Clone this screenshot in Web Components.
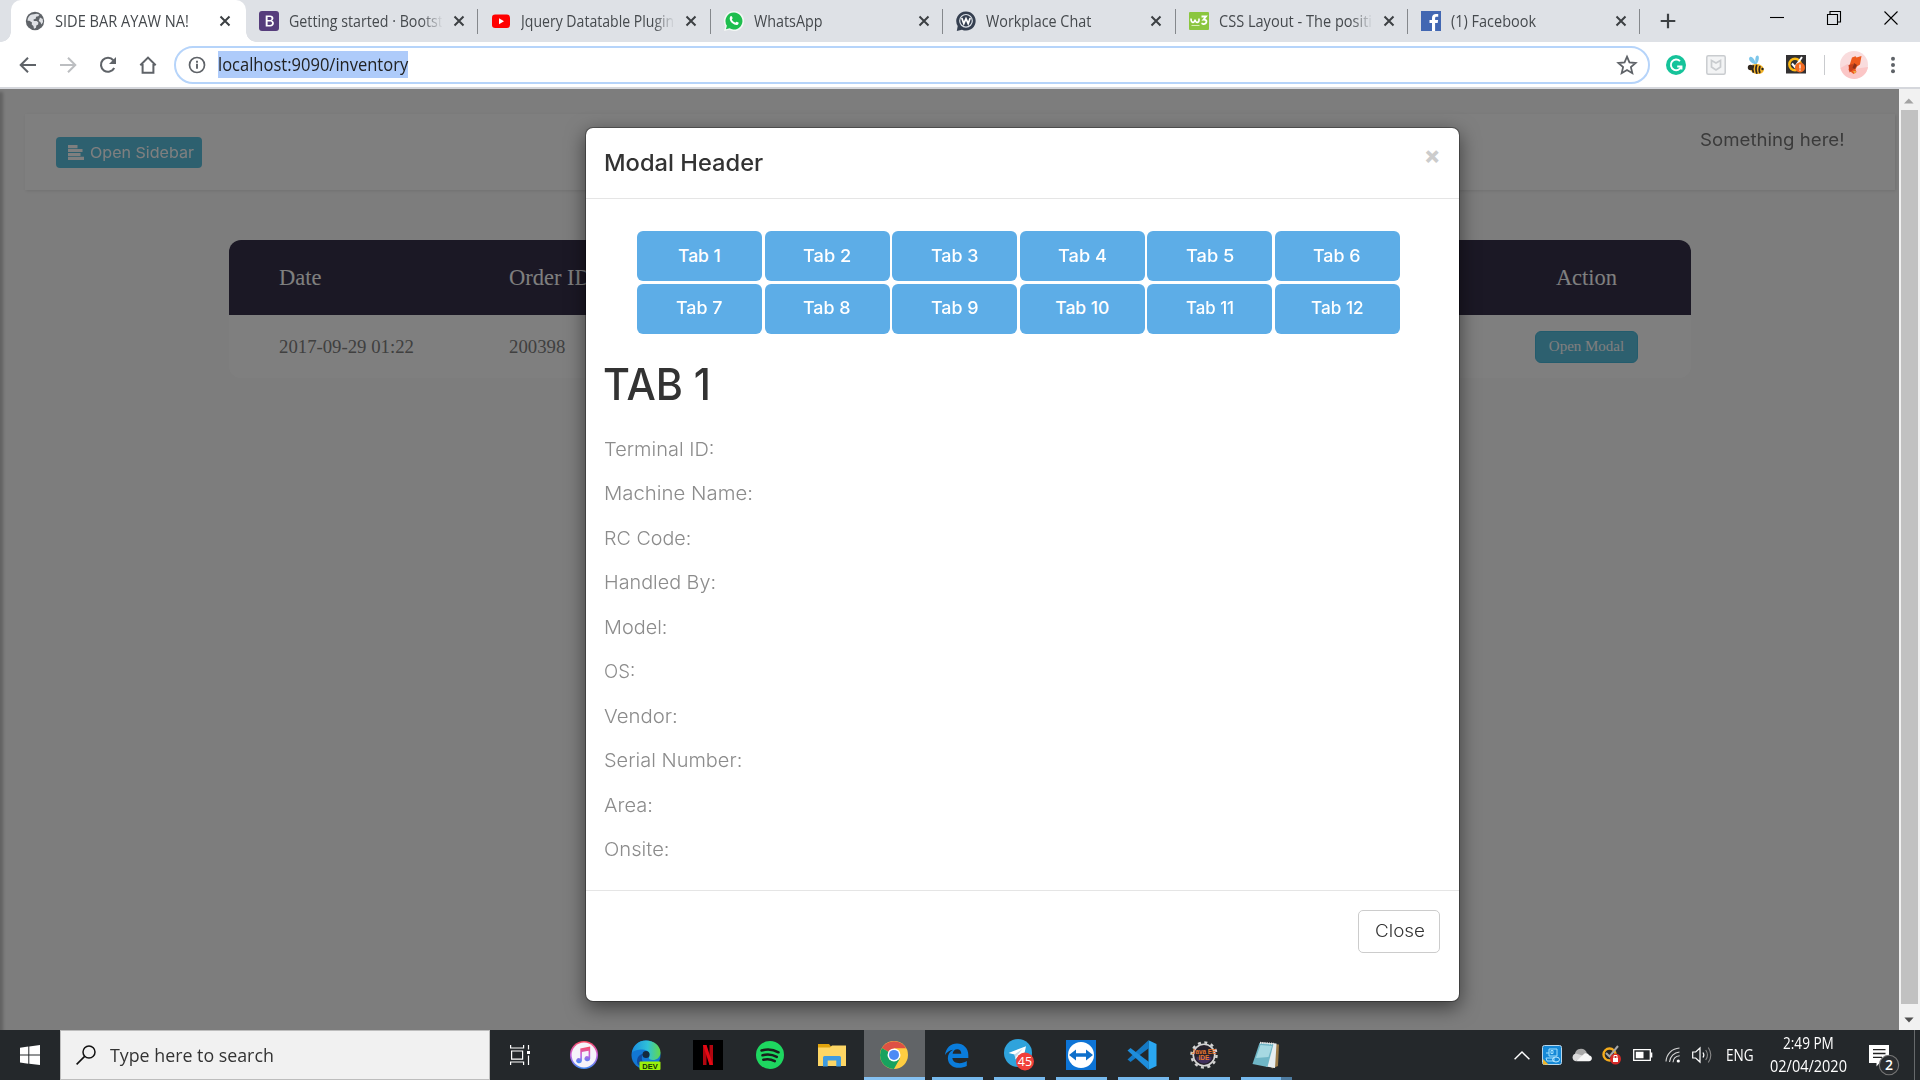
<!DOCTYPE html>
<html lang="en">
<head>
<meta charset="utf-8">
<title>SIDE BAR AYAW NA!</title>
<style>
html,body{margin:0;padding:0;width:1920px;height:1080px;overflow:hidden}
</style>
</head>
<body>
<desktop-screen></desktop-screen>
<script>
const ICONS = {
globe:['0 0 20 20','<circle cx="10" cy="10" r="9.2" fill="#5f6368"/><path d="M9 3.2c2-.9 4-.6 5.5.6l-1.2 1.5-2.2.4-.4 2-2.2.8.3 1.5h3l1.6 1.4-.3 2-1.8 1-.3 2.3-2 1.1-.6-2.7-1.7-1.6.3-2-2.6-1.8-1.9.1c.1-3.2 1.9-5.500 4.200-6.200z" fill="#dfe1e5"/><path d="M15 6.500l2.700 1.500.3 3-1.500 2.500-1.200-2.500-1.600-1z" fill="#dfe1e5"/>'],
boot:['0 0 20 20','<rect width="20" height="20" rx="3" fill="#563d7c"/><path d="M6.700 4.500h4.500c2 0 3.200 1 3.200 2.700 0 1.200-.7 2.100-1.800 2.400 1.400.2 2.300 1.300 2.300 2.700 0 2-1.400 3.200-3.700 3.200H6.700zM8.600 6.100v3h2.100c1.200 0 1.800-.5 1.800-1.500s-.6-1.500-1.700-1.500zm0 4.500v3.300h2.400c1.300 0 2-.6 2-1.700s-.7-1.600-2.100-1.600z" fill="#fff" fill-rule="evenodd"/>'],
yt:['0 0 20 20','<rect x="1" y="3.500" width="18" height="13.500" rx="3.200" fill="#f00"/><path d="M8 7.300l5 3-5 3z" fill="#fff"/>'],
wa:['0 0 20 20','<path d="M10 0a10 10 0 1 1-4.700 18.800L0 20l1.300-5A10 10 0 0 1 10 0z" fill="#f4f7f5"/><path d="M10 1.500a8.500 8.500 0 1 1-4.400 15.800l-3.700 1 1-3.600A8.500 8.500 0 0 1 10 1.500z" fill="#1ebe4e"/><path d="M6.500 5.300c.5-.5 1.200-.4 1.500.3l.6 1.500c.1.500-.6 1.100-.8 1.400.7 1.500 1.900 2.500 3.500 3.200.4-.3.900-1.300 1.400-1l1.800.9c.5.300-.1 1.700-.8 2.100-1.300.8-3.700-.1-5.600-1.700-1.500-1.300-3.500-4.300-1.600-6.700z" fill="#fff"/>'],
work:['0 0 20 20','<path d="M10 .4a9.600 9.600 0 1 1-4 18.300L.8 20l.9-5A9.600 9.600 0 0 1 10 .4z" fill="#353f50"/><circle cx="10" cy="9.800" r="6.300" fill="none" stroke="#dfe4ea" stroke-width="1.200"/><path d="M5.800 7l2 5.600L10 7.600l2.200 5 2-5.600" fill="none" stroke="#fff" stroke-width="1.700"/>'],
w3:['0 0 20 20','<rect width="20" height="18" y="1" rx="1" fill="#8bc63f"/><path d="M2 7.500c0 5 3.500 5 4 1 .5 4 4.500 4 4-1" fill="none" stroke="#fff" stroke-width="1.600"/><path d="M12.500 5.500h4.500l-2.500 3.200c4.500-.5 3.500 5-.5 4.300l-1.500-.8" fill="none" stroke="#fff" stroke-width="1.800"/><path d="M2.500 14.500h8" stroke="#d8efb5" stroke-width="1"/>'],
fb:['0 0 20 20','<rect width="20" height="20" fill="#4267b2"/><path d="M11 20v-8H8.500V9H11V7c0-2.700 1.500-4 4-4h2.200v2.800h-1.600c-1.200 0-1.500.6-1.500 1.500V9h3l-.4 3h-2.600v8z" fill="#fff"/>'],
x:['0 0 12 12','<path d="M1.500 1.500l9 9M10.500 1.500l-9 9" stroke="#3c4043" stroke-width="2" fill="none"/>'],
plus:['0 0 16 16','<path d="M8 .7v14.600M.7 8h14.600" stroke="#3c4043" stroke-width="2.200"/>'],
wmin:['0 0 14 14','<path d="M0 6.500h14" stroke="#000" stroke-width="1.100"/>'],
wmax:['0 0 14 14','<path d="M.5 3.500h10v10H.5zM3 3.500V.5h10.500v10.500H11" stroke="#000" stroke-width="1.100" fill="none"/>'],
wclose:['0 0 14 14','<path d="M.5.5l13 13M13.500.5l-13 13" stroke="#000" stroke-width="1.100"/>'],
back:['0 0 18 18','<path d="M17 9H2.500M9 1.700L1.700 9 9 16.300" stroke="#5f6368" stroke-width="2" fill="none"/>'],
fwd:['0 0 18 18','<path d="M1 9h14.500M9 1.700L16.300 9 9 16.300" stroke="#bcbec1" stroke-width="2" fill="none"/>'],
reload:['0 0 18 18','<path d="M15.200 12A7 7 0 1 1 14.300 4.200" stroke="#5f6368" stroke-width="2.100" fill="none"/><path d="M17 1v7h-7z" fill="#5f6368"/>'],
home:['0 0 18 18','<path d="M1.300 9.200L9 1.600l7.700 7.600M3.600 8v8.800h10.800V8" stroke="#5f6368" stroke-width="2" fill="none"/>'],
info:['0 0 18 18','<circle cx="9" cy="9" r="7.500" stroke="#5f6368" stroke-width="1.700" fill="none"/><path d="M9 7.800v5M9 4.700v2" stroke="#5f6368" stroke-width="1.900"/>'],
star:['0 0 18 18','<path d="M9 1.500l2.200 5.200 5.600.5-4.300 3.700 1.300 5.500L9 13.500l-4.800 2.900 1.300-5.500L1.200 7.200l5.600-.5z" stroke="#5f6368" stroke-width="1.600" fill="none"/>'],
gram:['0 0 20 20','<circle cx="10" cy="10" r="10" fill="#15c39a"/><path d="M14 6.200a5.300 5.300 0 1 0 1.200 5.300h-4M15.500 11v3.500" stroke="#fff" stroke-width="1.900" fill="none"/>'],
mcafee:['0 0 20 20','<rect x=".8" y=".8" width="18.400" height="18.400" rx="1.500" fill="#f3f4f5" stroke="#c9cccf" stroke-width="1.500"/><path d="M5.500 5.500l4.500 2.500 4.500-2.500v6.500L10 15l-4.500-3z" fill="none" stroke="#c9cccf" stroke-width="1.700"/>'],
bee:['0 0 20 20','<path d="M8.500 9C3 7 2 3 4 2s5 3 5.500 6C9 4 9.500.5 11.500.500s2 5-1 8.500z" fill="#7cc6ea"/><ellipse cx="11" cy="14" rx="7" ry="5" fill="#f4b52b" transform="rotate(12 11 14)"/><path d="M7.500 10.200c-1 2-1 5 0 7.500M10.800 9.800c-1.300 3-1 6 .2 9M14 11c-1 2.500-1 5 0 7" stroke="#2b2320" stroke-width="1.700" fill="none"/><circle cx="4.500" cy="12.500" r="2.700" fill="#32281f"/><circle cx="16.500" cy="14" r="1.200" fill="#222"/>'],
norton:['0 0 20 20','<rect width="20" height="18.500" fill="#333132"/><circle cx="9" cy="9.500" r="5.700" fill="none" stroke="#fdbb13" stroke-width="2.400"/><path d="M6 8.500l3 3.500 7-10" stroke="#fff" stroke-width="2" fill="none"/><circle cx="14" cy="12.500" r="5" fill="#f26a21"/><path d="M14 9.500v4M14 14.500v1.300" stroke="#fff" stroke-width="1.200"/>'],
avatar:['0 0 28 28','<circle cx="14" cy="14" r="14" fill="#f9dcdd"/><path d="M.5 17l7-4 6 5 14.500-2a14 14 0 0 1-27.500 1z" fill="#fbc6c6"/><path d="M12 6.500l3.500-1.200 1 1.200L21.500 5 20 13.500l-3 2-1.500 3 1 2.500-3 2-5-4 1-4.500z" fill="#ee5a1e"/><path d="M8.500 14l4.500-1 1 5-4.500 3.500z" fill="#c8401a"/><path d="M14 12l3 2-2 4-2.500-1z" fill="#8e3018"/><path d="M13 20l3 0-1 3z" fill="#e8b04a"/>'],
dots:['0 0 6 20','<circle cx="3" cy="3.700" r="2" fill="#5f6368"/><circle cx="3" cy="10" r="2" fill="#5f6368"/><circle cx="3" cy="16.300" r="2" fill="#5f6368"/>'],
align:['0 0 16 15','<path d="M0 0h9.500v3.200H0zM0 4h14.500v3H0zM0 8h12.500v3H0zM0 11.800h16V15H0z" fill="#fff"/>'],
up:['0 0 10 6','<path d="M0 5.500L4.800.500l4.800 5z" fill="#a3a3a3"/>'],
down:['0 0 10 6','<path d="M.4.500L5 5.500l4.600-5z" fill="#505050"/>'],
win:['0 0 20 20','<path d="M0 2.800l8.300-1.200v8H0zM9.300 1.400L20 0v9.600H9.300zM0 10.600h8.300v8.100L0 17.500zM9.300 10.600H20V20L9.300 18.700z" fill="#fff"/>'],
search:['0 0 20 20','<circle cx="13" cy="7" r="6" stroke="#111" stroke-width="1.500" fill="none"/><path d="M8.600 11.400L.6 19.400" stroke="#111" stroke-width="1.600"/>'],
taskview:['0 0 20 20','<path d="M.6 0v3h13V0M.6 20v-3h13v3M1.600 6h11v8.200h-11zM18.500 0v4.500M18.500 10.500V20" stroke="#fff" stroke-width="1.200" fill="none"/><path d="M17 6h3v3h-3z" fill="#fff"/>'],
itunes:['0 0 28 28','<defs><linearGradient id="a" x1="0" y1="0" x2="0" y2="1"><stop offset="0" stop-color="#fb4b5f"/><stop offset=".5" stop-color="#c860e0"/><stop offset="1" stop-color="#3d8df5"/></linearGradient></defs><circle cx="14" cy="14" r="14" fill="url(#a)"/><circle cx="14" cy="14" r="12.400" fill="#f5f3fa"/><path d="M10.300 7.500L20.200 5.500v12.300a2.900 2.500 0 1 1-1.600-2.300V9.700l-6.700 1.400v8.700a2.900 2.500 0 1 1-1.600-2.300z" fill="url(#a)"/>'],
edgedev:['0 0 30 30','<defs><linearGradient id="b" x1="0" y1="0" x2="1" y2="0"><stop offset="0" stop-color="#1b8fe0"/><stop offset=".55" stop-color="#2fc1d8"/><stop offset="1" stop-color="#63d94a"/></linearGradient></defs><circle cx="15" cy="15" r="14.500" fill="#1277d4"/><path d="M1 13C2 5 8 .5 15 .5c8 0 14.500 5.500 14.500 12 0 5-4 7.500-7.500 7.500-3 0-4.500-1-4-2.500 2-4-1-8-6.500-8C6 9.500 2 11 1 13z" fill="url(#b)"/><path d="M12 14c-3 5 0 11 6 12-5 2-9 .5-11.500-2C5 19 7.500 14.500 12 14z" fill="#114a9c"/><circle cx="15" cy="14.500" r="3.500" fill="#152a3e"/><rect x="8.500" y="21.500" width="21" height="8.500" rx="1" fill="#9bf00b"/><text x="19" y="28.700" font-family="Liberation Sans" font-weight="700" font-size="7.500" text-anchor="middle" fill="#10300a">DEV</text>'],
netflix:['0 0 30 30','<rect width="30" height="30" fill="#000"/><path d="M10 5h3.500v20H10zM16.500 5H20v20h-3.500z" fill="#b1060f"/><path d="M10 5h3.500L20 25h-3.500z" fill="#e50914"/>'],
spotify:['0 0 28 28','<circle cx="14" cy="14" r="14" fill="#1ed760"/><path d="M5.500 9.500c6-1.700 12-1 17 1.800M6.500 14.300c5-1.400 10-.8 14.300 1.600M7.300 18.700c4-1 8-.5 11.500 1.400" stroke="#191f1c" stroke-width="2.500" fill="none" stroke-linecap="round"/>'],
folder:['0 0 28 24','<path d="M0 1h11l2 2.500H28V23H0z" fill="#e0a30c"/><path d="M0 4.500h12l2-2h14V23H0z" fill="#fdd665"/><path d="M5 23.500V14.500q0-1.500 1.500-1.500h15q1.500 0 1.500 1.500v9h-4.700V17.500H9.700v6z" fill="#3f9be0"/>'],
chrome:['0 0 28 28','<circle cx="14" cy="14" r="14" fill="#ffcd41"/><path d="M14 14L1.900 7A14 14 0 0 1 26.100 7.200H14z" fill="#de5144"/><path d="M14 14L1.900 7a14 14 0 0 0 12 21l6-10.500z" fill="#18a25f"/><circle cx="14" cy="13.900" r="6.500" fill="#fff"/><circle cx="14" cy="13.900" r="5" fill="#4c8bf5"/>'],
edge:['0 0 26 26','<path d="M1 12.500C2 5 7 .500 13.500.500 20 .500 25.300 5.300 25.300 12.500v3.200H8.700c.3 3.700 3.500 5.300 7.500 5.300 2.800 0 5.300-.8 7.500-2.200v5C21.500 25 18.500 25.700 15.500 25.700 9 25.700 4.300 22 4 16c-.1-4 2-7 5.500-9C6 7.500 3 9.500 1 12.500zM9 11.300h9c0-3-1.500-4.800-4.200-4.800S9.300 8.500 9 11.300z" fill="#0a7cdb" fill-rule="evenodd"/>'],
telegram:['0 0 30 32','<circle cx="14" cy="14" r="14" fill="#2fa3dc"/><path d="M4.500 14L22 7.200l-3 14-5-3.400-2.500 2.800-.9-5z" fill="#fff"/><path d="M10.500 15.500L19 9.500l-6.500 7.500-1 3.500z" fill="#c5daea"/><circle cx="21" cy="22.500" r="9" fill="#f03f3a"/><text x="21" y="27" font-family="Open Sans" font-size="12.500" text-anchor="middle" fill="#fff">45</text>'],
tv:['0 0 30 30','<rect width="30" height="30" fill="#0d74d6"/><circle cx="15" cy="15" r="13" fill="#fff"/><path d="M3 15l7-5.500v3.800h10V9.500l7 5.500-7 5.500v-3.800H10v3.800z" fill="#0e70cb"/>'],
vscode:['0 0 30 30','<path d="M21.500.3L29.500 4v22l-8 3.700z" fill="#2aa7f2"/><path d="M22 8L3.500 22l-3-2.500L21.500.3z" fill="#1479c4"/><path d="M22 22L3.500 8l-3 2.500 21 19.200z" fill="#1e8ddb"/>'],
java:['0 0 30 30','<circle cx="15" cy="15" r="11.500" fill="#27222c" stroke="#d4d4d4" stroke-width="1.800"/><circle cx="15" cy="15" r="13.400" fill="none" stroke="#d4d4d4" stroke-width="2.600" stroke-dasharray="3.200 3.815"/><path d="M7 17h16v3q-8 8-16 0z" fill="#41305e"/><text x="15" y="14.300" font-family="Liberation Sans" font-weight="700" font-size="7.300" text-anchor="middle" fill="#e8772c" textLength="26" lengthAdjust="spacingAndGlyphs">Java EE</text><text x="15" y="20.500" font-family="Liberation Sans" font-weight="700" font-size="7" text-anchor="middle" fill="#e8772c">IDE</text>'],
notepad:['0 0 28 28','<path d="M8 1.500L27 3.500 26 25 20 27.500z" fill="#9b7b48"/><path d="M9 1.500L24.500 2.500 23 27 14 25.500z" fill="#e6edf0"/><path d="M7.500 2L21.500 3 15.500 26 .500 23z" fill="#6fb6c6"/><path d="M8.500 4L20 5 16.500 16 4 17z" fill="#a6d9e2"/><path d="M8 1.800L22 2.800" stroke="#e6e6e6" stroke-width="2" stroke-dasharray="1.200 1"/>'],
caret:['0 0 16 9','<path d="M.6 8.300L8 .9l7.400 7.400" stroke="#fff" stroke-width="1.400" fill="none"/>'],
intel:['0 0 20 20','<rect x=".5" y=".5" width="19" height="19" rx="2" fill="#1588d6" stroke="#b9d6ea"/><path d="M1 14l5.500 5.500H1z" fill="#f0b429"/><path d="M7 4h8v7H7zM9 5.500h2v3H9zM4 8h3M4 13h8v3H5z" fill="none" stroke="#9fe0ff" stroke-width="1"/><ellipse cx="14" cy="14.500" rx="3.500" ry="2.500" fill="none" stroke="#bfeaff"/>'],
cloud:['0 0 20 14','<path d="M3 9.500C2 4 5 .800 9 .800c3 0 5.300 2 6 4.500L8 10z" fill="#a9a9a9"/><path d="M3.800 13.200A3.900 3.900 0 0 1 4 5.500L12 8z" fill="#dadada"/><path d="M4 13.200L12.500 5.500c2-.9 4 0 4.500 1.800 4 .5 3.700 5.900 0 5.900z" fill="#f7f7f7"/>'],
nshield:['0 0 20 20','<circle cx="7.500" cy="9.500" r="6" fill="none" stroke="#f5ac1c" stroke-width="2.400"/><path d="M4 8l3.500 3.500L16 1" stroke="#a8a8a8" stroke-width="2" fill="none"/><circle cx="13.500" cy="14" r="5.500" fill="#d42a28"/><path d="M11 13h5v4h-5z" fill="#fff"/><path d="M12 13v-2.500h3V13" stroke="#fff" fill="none"/>'],
batt:['0 0 20 12','<path d="M.7.700h16.600v10.600H.7z" fill="none" stroke="#fff" stroke-width="1.300"/><path d="M2.800 2.800h7.700v6.400H2.800zM18 3.500h1.300v5H18z" fill="#fff"/>'],
wifi:['0 0 16 16','<path d="M1 14.500C1.500 7 7 1.500 14.500 1M4.500 15C5 9.500 9 5.500 14.500 5M8 15.300c.3-3.500 3-6.200 6.700-6.500" stroke="#d7d7d7" stroke-width="1.100" fill="none"/><circle cx="13.300" cy="14" r="1.600" fill="#fff"/>'],
vol:['0 0 20 18','<path d="M.7 6h3L8 2v14l-4.300-4H.7z" stroke="#fff" stroke-width="1.200" fill="none"/><path d="M11 6.500q1.700 2.500 0 5" stroke="#fff" fill="none" stroke-width="1.200"/><path d="M13.700 4q3.500 5 0 10M16.300 1.500q5 7.500 0 15" stroke="#888" fill="none" stroke-width="1.100"/>'],
note:['0 0 30 32','<path d="M0 0h20v18h-9.500l-3 3.500V18H0z" fill="#fff"/><path d="M4 4.700h12.500M4 8.500h12.500M4 12.300h9" stroke="#222" stroke-width="1.300"/><circle cx="20" cy="20" r="9.700" fill="#2a2d30" stroke="#777" stroke-width="1.100"/><text x="20" y="25" font-family="Open Sans" font-weight="600" font-size="14" text-anchor="middle" fill="#fff">2</text>']
};

const define = (name, html, setup) => customElements.define(name, class extends HTMLElement {
  constructor() {
    super();
    this.attachShadow({mode:'open'});
  }
  connectedCallback() {
    if (this.ready) return;
    this.ready = true;
    this.shadowRoot.innerHTML = typeof html === 'function' ? html(this) : html;
    if (setup) setup(this);
  }
});

define('ui-icon', el => {
  const [vb, body] = ICONS[el.getAttribute('name')];
  return `<style>:host{display:block;flex:none;width:${el.getAttribute('w')}px;height:${el.getAttribute('h') || el.getAttribute('w')}px}svg{display:block;width:100%;height:100%;overflow:visible}</style><svg viewBox="${vb}" preserveAspectRatio="none">${body}</svg>`;
});

define('browser-tab', el => `<style>
:host{display:flex;flex:none;align-items:center;width:232.4px;height:42px;box-sizing:border-box;padding-left:13px;position:relative;font:16px/42px "Open Sans",sans-serif;color:#45494d}
.t{width:153px;margin-left:10px;overflow:hidden;white-space:nowrap;height:42px}
:host([fade]) .t{-webkit-mask-image:linear-gradient(90deg,#000 132px,transparent 154px)}
.c{margin-left:11px}
:host([active]){background:#fff;border-radius:10px 10px 0 0;width:235px;padding-left:14px}
:host([active]) .t{width:153px}
:host([active])::before,:host([active])::after{content:"";position:absolute;bottom:0;width:10px;height:10px}
:host([active])::before{left:-10px;background:radial-gradient(circle at 0 0,transparent 9.500px,#fff 10px)}
:host([active])::after{right:-10px;background:radial-gradient(circle at 100% 0,transparent 9.500px,#fff 10px)}
:host(:not([active]))::after{content:"";position:absolute;right:0;top:9px;width:1px;height:25px;background:#85888c}
</style><ui-icon name="${el.getAttribute('icon')}" w="20"></ui-icon><div class="t"><fit-text w="${el.getAttribute('w')}"><slot></slot></fit-text></div><ui-icon class="c" name="x" w="12"></ui-icon>`);

define('tab-strip', `<style>
:host{display:flex;height:42px;background:#dee1e6;padding-left:11px}
.p{margin:13px 0 0 20px}
.w{margin-left:auto;display:flex;gap:43px;padding:11px 22px 0 0}
</style>
<browser-tab active icon="globe" w="134">SIDE BAR AYAW NA!</browser-tab>
<browser-tab fade icon="boot" w="176">Getting started · Bootstrap</browser-tab>
<browser-tab fade icon="yt" w="160">Jquery Datatable Plugins</browser-tab>
<browser-tab icon="wa" w="69">WhatsApp</browser-tab>
<browser-tab icon="work" w="105">Workplace Chat</browser-tab>
<browser-tab fade icon="w3" w="171">CSS Layout - The position</browser-tab>
<browser-tab icon="fb" w="85">(1) Facebook</browser-tab>
<ui-icon class="p" name="plus" w="16"></ui-icon>
<div class="w"><ui-icon name="wmin" w="14"></ui-icon><ui-icon name="wmax" w="14"></ui-icon><ui-icon name="wclose" w="14"></ui-icon></div>`);

define('nav-toolbar', `<style>
:host{display:flex;align-items:center;height:47px;box-sizing:border-box;background:#fff;border-bottom:2px solid #d5d7dc;padding:0 21px 0 19px;font:18px/27px "Open Sans",sans-serif;color:#222}
.nav{display:flex;gap:22px}
.o{display:flex;align-items:center;box-sizing:border-box;width:1476px;height:38px;border:2.500px solid #b6d4fa;border-radius:19px;margin-left:17px;padding:0 11px 0 12px}
.u{background:#aecbfa;margin-left:12px;height:27px}
.s{margin-left:auto}
.e{display:flex;align-items:center;gap:20px;margin-left:16px}
.l{width:1px;height:20px;background:#c9cbce}
.a{margin:0 22px 0 15px}
</style><div class="nav"><ui-icon name="back" w="18"></ui-icon><ui-icon name="fwd" w="18"></ui-icon><ui-icon name="reload" w="18"></ui-icon><ui-icon name="home" w="18"></ui-icon></div>
<div class="o"><ui-icon name="info" w="18"></ui-icon><div class="u"><fit-text w="190">localhost:9090/inventory</fit-text></div><ui-icon class="s" name="star" w="20"></ui-icon></div>
<div class="e"><ui-icon name="gram" w="20"></ui-icon><ui-icon name="mcafee" w="20"></ui-icon><ui-icon name="bee" w="20"></ui-icon><ui-icon name="norton" w="20"></ui-icon></div>
<div class="l" style="margin-left:18px"></div><ui-icon class="a" name="avatar" w="28"></ui-icon><ui-icon name="dots" w="6" h="20"></ui-icon>`);

define('page-navbar', `<style>
:host{display:flex;box-sizing:border-box;height:76px;margin:25px 4px 0 25px;padding:23px 50px 0 31px;background:#fff;box-shadow:1px 1px 3px rgba(0,0,0,.1);justify-content:space-between;font-family:Inter,sans-serif}
button{display:flex;align-items:center;width:146px;height:31px;border:0;border-radius:4px;background:#5bc0de;color:#fff;padding:0 0 0 12px;font:400 15px/31px Inter,sans-serif}
p{margin:-9px 0 0;font-size:17.500px;line-height:24px;color:#777}
</style><button><ui-icon name="align" w="16" h="15"></ui-icon><fit-text w="104" style="margin-left:2.500px">Open Sidebar</fit-text></button><p><fit-text w="145">Something here!</fit-text></p>`);

define('order-table', `<style>
:host{display:block;width:1462px;margin:50px 0 0 229px;border-radius:12px;overflow:hidden;background:#fff;font-family:"Liberation Serif",serif}
.r{display:grid;grid-template-columns:230px 1fr 209px;padding-left:50px;align-items:center;height:63px;font-size:18.750px;color:#808080}
.h{height:75px;background:#36304a;color:#fff;font-size:22.500px}
.a{display:flex;justify-content:center}
button{width:103px;height:32px;padding:0;border:1px solid #46b8da;border-radius:6px;background:#5bc0de;color:#fff;font:15px "Liberation Serif",serif}
</style><div class="r h"><span>Date</span><span>Order ID</span><span class="a">Action</span></div>
<div class="r"><span>2017-09-29 01:22</span><span>200398</span><span class="a"><button>Open Modal</button></span></div>`);

define('modal-tab', el => `<style>
:host{display:flex;align-items:center;justify-content:center;height:50px;border-radius:6px;background:#5dade7;color:#fff;font:450 17.500px/50px Inter,sans-serif}
</style><fit-text w="${el.getAttribute('w')}"><slot></slot></fit-text>`);

define('modal-dialog', `<style>
:host{display:flex;flex-direction:column;box-sizing:border-box;width:875px;height:875px;background:#fff;background-clip:padding-box;border:1px solid rgba(0,0,0,.3);border-radius:8px;box-shadow:0 6px 19px rgba(0,0,0,.5);font-family:Inter,sans-serif;color:#333}
header{display:flex;justify-content:space-between;height:71px;box-sizing:border-box;border-bottom:1px solid #e5e5e5;padding:18px 18.500px 0 18px}
h4{margin:0;font:500 22.500px/34px Inter,sans-serif}
.x{font:800 24px/24px Inter,sans-serif;color:#ccc;height:24px;margin-top:-2.500px}
.g{display:grid;grid-template-columns:repeat(6,125px);column-gap:2.600px;row-gap:3px;margin:32px 0 0 51px}
.g modal-tab:nth-child(n+7){line-height:48px;height:48px;padding-bottom:2px}
h1{margin:25px 0 0 17px;font:500 44px/50px Inter,sans-serif}
.f{padding:18px 0 0 18px;font:300 19.250px/44.450px Inter,sans-serif;color:#8c8c8c}
footer{margin-top:18.500px;border-top:1px solid #e5e5e5;padding:19px 19px 0;display:flex;justify-content:flex-end}
button{display:flex;justify-content:center;width:82px;height:43px;box-sizing:border-box;border:1px solid #ccc;border-radius:5px;background:#fff;padding:0 2px 0 0;color:#333;font:350 17px/40px Inter,sans-serif}
</style>
<header><h4><fit-text w="159">Modal Header</fit-text></h4><span class="x">×</span></header>
<div class="g"><modal-tab w="43">Tab 1</modal-tab><modal-tab w="48">Tab 2</modal-tab><modal-tab w="48">Tab 3</modal-tab><modal-tab w="49">Tab 4</modal-tab><modal-tab w="48">Tab 5</modal-tab><modal-tab w="48">Tab 6</modal-tab><modal-tab w="47">Tab 7</modal-tab><modal-tab w="48">Tab 8</modal-tab><modal-tab w="48">Tab 9</modal-tab><modal-tab w="54">Tab 10</modal-tab><modal-tab w="48">Tab 11</modal-tab><modal-tab w="53">Tab 12</modal-tab></div>
<h1><fit-text w="108">TAB 1</fit-text></h1>
<div class="f"><fit-text w="110">Terminal ID:</fit-text><fit-text w="149">Machine Name:</fit-text><fit-text w="87">RC Code:</fit-text><fit-text w="112">Handled By:</fit-text><fit-text w="63">Model:</fit-text><fit-text w="31">OS:</fit-text><fit-text w="74">Vendor:</fit-text><fit-text w="138">Serial Number:</fit-text><fit-text w="49">Area:</fit-text><fit-text w="66">Onsite:</fit-text></div>
<footer><button><fit-text w="50">Close</fit-text></button></footer>`);

define('scroll-bar', `<style>
:host{display:flex;flex-direction:column;align-items:center;width:21px;background:#f1f1f1;box-sizing:border-box;padding:9px 1px 0 0}
div{width:17px;height:894px;background:#c1c1c1;margin:6px 0 13px}
</style><ui-icon name="up" w="10" h="6"></ui-icon><div></div><ui-icon name="down" w="10" h="6"></ui-icon>`);

define('page-view', `<style>
:host{display:flex;height:941px;overflow:hidden}
.v{position:relative;width:1899px;height:941px;background:#fafafa;overflow:hidden;display:flow-root}
.side{position:absolute;left:-20px;top:0;width:20px;height:941px;box-shadow:3px 3px 3px rgba(0,0,0,.22)}
.bd{position:absolute;inset:0;background:rgba(0,0,0,.5);padding:38px 0 0 585px}
</style><div class="v"><page-navbar></page-navbar><order-table></order-table><div class="side"></div><div class="bd"><modal-dialog></modal-dialog></div></div><scroll-bar></scroll-bar>`);

define('task-item', el => `<style>
:host{display:flex;flex-direction:column;flex:none;align-items:center;justify-content:center;width:61.900px;height:50px;position:relative}
:host([run])::after{content:"";position:absolute;bottom:0;left:6px;width:51px;height:3px;background:#76b9ed}
:host([multi])::after{background:linear-gradient(90deg,#76b9ed 40px,#4d7ba0 40px)}
:host([active]){background:#616467;width:61px;margin:0 .9px 0 1px}
:host([active])::after{left:0;width:61px;background:#85c1f2}
</style><ui-icon name="${el.getAttribute('icon')}" w="${el.getAttribute('w')}" h="${el.getAttribute('h') || el.getAttribute('w')}"></ui-icon>`);

define('task-bar', `<style>
:host{display:flex;height:50px;background:#24282b;align-items:center;font-family:"Open Sans",sans-serif}
.s{width:60px;display:flex;justify-content:center}
.q{display:flex;align-items:center;box-sizing:border-box;width:430px;height:50px;background:#f1f1f1;border:1px solid #bdbdbd;padding-left:15px;gap:14px;font-size:19px;line-height:48px;color:#333}
.v{width:63.500px;display:flex;box-sizing:border-box;padding-left:20px}
.t{margin-left:auto;display:flex;align-items:center;color:#fff;font-size:16px;line-height:27px}
.c{display:flex;flex-direction:column;align-items:center;width:78px;height:50px;margin-left:15px}
.d{width:1px;height:50px;background:#66696b;margin:0 5px 0 15px}
</style><div class="s"><ui-icon name="win" w="20"></ui-icon></div>
<div class="q"><ui-icon name="search" w="20"></ui-icon><fit-text w="164">Type here to search</fit-text></div>
<div class="v"><ui-icon name="taskview" w="20"></ui-icon></div>
<task-item icon="itunes" w="28"></task-item><task-item icon="edgedev" w="30"></task-item><task-item icon="netflix" w="30"></task-item><task-item icon="spotify" w="28"></task-item><task-item icon="folder" w="28" h="24"></task-item><task-item active run icon="chrome" w="28"></task-item><task-item run icon="edge" w="25"></task-item><task-item run icon="telegram" w="30" h="32"></task-item><task-item run icon="tv" w="30"></task-item><task-item run icon="vscode" w="30"></task-item><task-item run icon="java" w="28"></task-item><task-item run multi icon="notepad" w="28"></task-item>
<div class="t"><ui-icon name="caret" w="16" h="9"></ui-icon><ui-icon name="intel" w="20" style="margin-left:12px"></ui-icon><ui-icon name="cloud" w="20" h="14" style="margin-left:10px"></ui-icon><ui-icon name="nshield" w="20" style="margin-left:10px"></ui-icon><ui-icon name="batt" w="20" h="12" style="margin-left:11px"></ui-icon><ui-icon name="wifi" w="16" style="margin-left:12px"></ui-icon><ui-icon name="vol" w="20" h="18" style="margin-left:11px"></ui-icon><fit-text w="28" style="margin-left:14px">ENG</fit-text>
<div class="c"><fit-text w="51" style="height:23px">2:49 PM</fit-text><fit-text w="77">02/04/2020</fit-text></div>
<ui-icon name="note" w="30" h="32" style="margin:12px 0 0 22px"></ui-icon><div class="d"></div></div>`);

define('desktop-screen', `<style>
:host{display:flex;flex-direction:column;width:1920px;height:1080px;overflow:hidden}
</style><tab-strip></tab-strip><nav-toolbar></nav-toolbar><page-view></page-view><task-bar></task-bar>`);

/* Scales a line of text horizontally so that it fills the width given in "w". */
define('fit-text', el => `<style>:host{display:block;width:${el.getAttribute('w')}px;white-space:nowrap}span{display:inline-block;transform-origin:0 50%}</style><span><slot></slot></span>`, el => {
  const s = el.shadowRoot.querySelector('span');
  s.style.transform = `scaleX(${el.getAttribute('w') / s.offsetWidth})`;
});
</script>
</body>
</html>
